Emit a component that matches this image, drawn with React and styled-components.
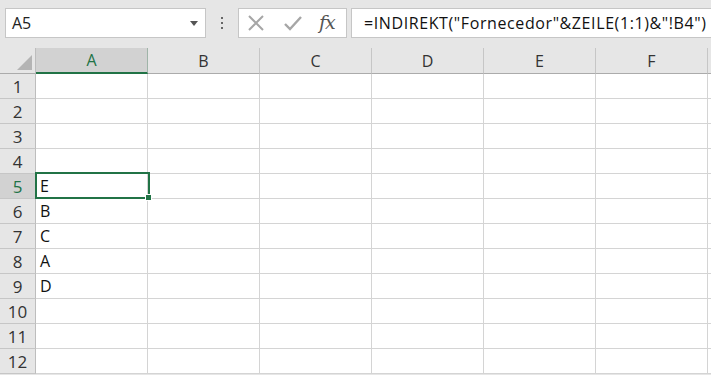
import React from 'react';
import styled, { createGlobalStyle } from 'styled-components';

const Global = createGlobalStyle`
  html, body {
    margin: 0;
    padding: 0;
    background: #e6e6e6;
    overflow: hidden;
  }
`;

const Page = styled.div`
  width: 711px;
  height: 375px;
  overflow: hidden;
  font-family: 'Open Sans', 'Liberation Sans', sans-serif;
`;

const Toolbar = styled.div`
  height: 48px;
  display: flex;
  align-items: flex-start;
  padding: 8px 0 0 5px;
  box-sizing: border-box;
  background: #e6e6e6;
`;

const NameBox = styled.div`
  width: 201px;
  height: 30px;
  box-sizing: border-box;
  background: #fff;
  border: 1px solid #c6c6c6;
  display: flex;
  align-items: center;
  justify-content: space-between;
  padding: 0 7px 0 6px;
  font-size: 16px;
  color: #222;
`;

const Caret = styled.span`
  width: 0;
  height: 0;
  border-left: 4px solid transparent;
  border-right: 4px solid transparent;
  border-top: 5px solid #555;
`;

const Dots = styled.div`
  width: 32px;
  height: 30px;
  display: flex;
  flex-direction: column;
  align-items: center;
  justify-content: center;
  gap: 3px;
  span {
    width: 2px;
    height: 2px;
    background: #666;
  }
`;

const IconBox = styled.div`
  width: 109px;
  height: 30px;
  box-sizing: border-box;
  background: #fff;
  border: 1px solid #c6c6c6;
  display: flex;
  align-items: center;
  padding-left: 8px;
  gap: 18px;
`;

const Fx = styled.span`
  font-family: 'DejaVu Serif', 'Liberation Serif', serif;
  font-style: italic;
  font-size: 19px;
  color: #555;
  letter-spacing: -1px;
  margin-left: -2px;
  margin-top: -2px;
`;

const FormulaBox = styled.div`
  flex: 1;
  height: 30px;
  margin-left: 4px;
  box-sizing: border-box;
  background: #fff;
  border: 1px solid #c6c6c6;
  border-right: none;
  display: flex;
  align-items: center;
  padding-left: 12px;
  font-size: 16px;
  letter-spacing: 0.6px;
  color: #111;
  white-space: nowrap;
  overflow: hidden;
`;

const SheetWrap = styled.div`
  position: relative;
`;

const Sheet = styled.div`
  display: grid;
  grid-template-columns: 36px repeat(6, 112px) 1fr;
  grid-template-rows: 26px repeat(12, 25px);
  background: #fff;
`;

const Corner = styled.div`
  background: #e6e6e6;
  border-right: 1px solid #bdbdbd;
  border-bottom: 1px solid #ababab;
  position: relative;
  &::after {
    content: '';
    position: absolute;
    right: 3px;
    bottom: 3px;
    border-left: 15px solid transparent;
    border-bottom: 15px solid #b4b4b4;
  }
`;

const ColHead = styled.div`
  background: ${({ $active }) => ($active ? '#d2d2d2' : '#e6e6e6')};
  color: ${({ $active }) => ($active ? '#217346' : '#333')};
  border-right: 1px solid ${({ $active }) => ($active ? '#9fb4a8' : '#c6c6c6')};
  border-bottom: ${({ $active }) => ($active ? '2px solid #217346' : '1px solid #ababab')};
  box-sizing: border-box;
  display: flex;
  align-items: center;
  justify-content: center;
  font-size: 16px;
`;

const RowHead = styled.div`
  background: ${({ $active }) => ($active ? '#d2d2d2' : '#e6e6e6')};
  color: ${({ $active }) => ($active ? '#217346' : '#333')};
  border-right: 1px solid #bdbdbd;
  border-bottom: 1px solid #c6c6c6;
  box-sizing: border-box;
  display: flex;
  align-items: center;
  justify-content: center;
  font-size: 17px;
`;

const Cell = styled.div`
  border-right: 1px solid #d4d4d4;
  border-bottom: 1px solid #d4d4d4;
  box-sizing: border-box;
  display: flex;
  align-items: center;
  padding-left: 4px;
  font-size: 16px;
  color: #111;
`;

const Selection = styled.div`
  position: absolute;
  left: 35px;
  top: 124px;
  width: 115px;
  height: 27px;
  box-sizing: border-box;
  border: 2px solid #217346;
  pointer-events: none;
  &::after {
    content: '';
    position: absolute;
    right: -4px;
    bottom: -4px;
    width: 5px;
    height: 5px;
    background: #217346;
    border: 1px solid #fff;
  }
`;

const cols = ['A', 'B', 'C', 'D', 'E', 'F'];
const values = { 5: 'E', 6: 'B', 7: 'C', 8: 'A', 9: 'D' };

const Cross = () => (
  <svg width="18" height="18" viewBox="0 0 18 18">
    <path d="M2 2 L16 16 M16 2 L2 16" stroke="#a6a6a6" strokeWidth="2" fill="none" />
  </svg>
);

const Check = () => (
  <svg width="20" height="18" viewBox="0 0 20 18">
    <path d="M2 10 L7 15 L18 3" stroke="#a6a6a6" strokeWidth="2.4" fill="none" />
  </svg>
);

const App = () => (
  <Page>
    <Global />
    <Toolbar>
      <NameBox>
        A5
        <Caret />
      </NameBox>
      <Dots>
        <span />
        <span />
        <span />
      </Dots>
      <IconBox>
        <Cross />
        <Check />
        <Fx>fx</Fx>
      </IconBox>
      <FormulaBox>=INDIREKT("Fornecedor"&amp;ZEILE(1:1)&amp;"!B4")</FormulaBox>
    </Toolbar>
    <SheetWrap>
      <Sheet>
        <Corner />
        {cols.map((c) => (
          <ColHead key={c} $active={c === 'A'}>
            {c}
          </ColHead>
        ))}
        <ColHead />
        {Array.from({ length: 12 }, (_, i) => i + 1).map((r) => (
          <React.Fragment key={r}>
            <RowHead $active={r === 5}>{r}</RowHead>
            {cols.map((c) => (
              <Cell key={c}>{c === 'A' ? values[r] : ''}</Cell>
            ))}
            <Cell />
          </React.Fragment>
        ))}
      </Sheet>
      <Selection />
    </SheetWrap>
  </Page>
);

export default App;
